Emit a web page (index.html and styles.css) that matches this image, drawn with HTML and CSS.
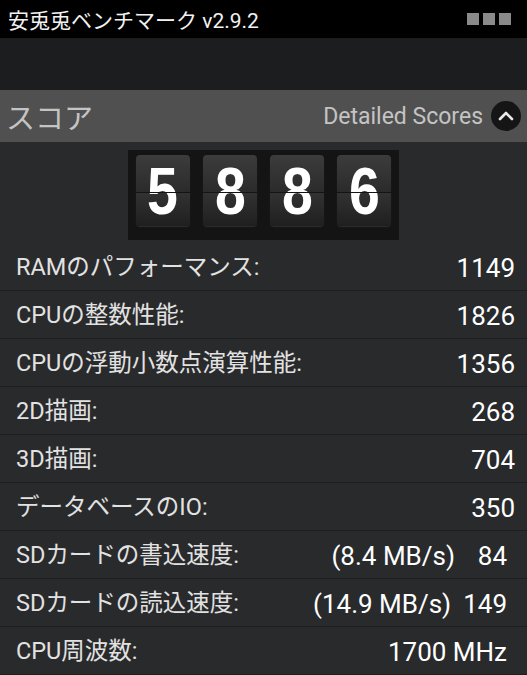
FILE: index.html
```html
<!DOCTYPE html>
<html lang="ja">
<head>
    <meta charset="UTF-8">
    <meta name="viewport" content="width=device-width, initial-scale=1.0">
    <title>安兎兎ベンチマーク</title>
    <link rel="stylesheet" href="styles.css">
</head>
<body>
    <div class="titlebar">
        <span class="app-title">安兎兎ベンチマーク v2.9.2</span>
        <div class="menu-dots">
            <span></span><span></span><span></span>
        </div>
    </div>
    <div class="band"></div>
    <div class="section-head">
        <span class="section-title">スコア</span>
        <div class="detail-toggle">
            <span>Detailed Scores</span>
            <span class="toggle-btn">
                <svg width="16" height="10" viewBox="0 0 16 10">
                    <path d="M2 8 L8 2 L14 8" fill="none" stroke="#e8e8e8" stroke-width="2.6" stroke-linecap="round" stroke-linejoin="round"/>
                </svg>
            </span>
        </div>
    </div>
    <div class="counter-wrap">
        <div class="counter">
            <div class="digit"><span>5</span></div>
            <div class="digit"><span>8</span></div>
            <div class="digit"><span>8</span></div>
            <div class="digit"><span>6</span></div>
        </div>
    </div>
    <ul class="scores">
        <li><span>RAMのパフォーマンス:</span><b>1149</b></li>
        <li><span>CPUの整数性能:</span><b>1826</b></li>
        <li><span>CPUの浮動小数点演算性能:</span><b>1356</b></li>
        <li><span>2D描画:</span><b>268</b></li>
        <li><span>3D描画:</span><b>704</b></li>
        <li><span>データベースのIO:</span><b>350</b></li>
        <li class="inset"><span>SDカードの書込速度:</span><b><i>(8.4 MB/s)</i><em>84</em></b></li>
        <li class="inset"><span>SDカードの読込速度:</span><b><i>(14.9 MB/s)</i><em>149</em></b></li>
        <li class="inset"><span>CPU周波数:</span><b>1700 MHz</b></li>
    </ul>
</body>
</html>
```

FILE: styles.css
```css
body {
    margin: 0;
    width: 527px;
    height: 675px;
    overflow: hidden;
    background: #292a2c;
    font-family: Roboto, "Noto Sans CJK JP", sans-serif;
    color: #e8e8e8;
}
.titlebar {
    height: 38px;
    background: #000;
    display: flex;
    align-items: center;
    justify-content: space-between;
    padding: 0 16px 0 8px;
}
.app-title {
    font-size: 21px;
    color: #f2f2f2;
}
.menu-dots {
    display: flex;
    gap: 4px;
}
.menu-dots span {
    width: 12px;
    height: 12px;
    background: #8a8a8a;
}
.band {
    height: 52px;
    background: #1c1d1f;
}
.section-head {
    height: 52px;
    background: #505050;
    display: flex;
    align-items: center;
    justify-content: space-between;
    padding: 0 6px 0 6px;
}
.section-title {
    font-size: 29px;
    color: #c4c4c4;
}
.detail-toggle {
    display: flex;
    align-items: center;
    gap: 8px;
    font-size: 23px;
    color: #c4c4c4;
}
.toggle-btn {
    width: 30px;
    height: 30px;
    border-radius: 50%;
    background: #151515;
    display: flex;
    align-items: center;
    justify-content: center;
}
.counter-wrap {
    height: 101px;
    display: flex;
    justify-content: center;
    padding-top: 8px;
    box-sizing: border-box;
}
.counter {
    width: 271px;
    height: 90px;
    background: #141414;
    display: flex;
    gap: 13.5px;
    padding: 5px 8px 0 8px;
    box-sizing: border-box;
}
.digit {
    position: relative;
    width: 55px;
    height: 71px;
    border-radius: 4px;
    background: linear-gradient(#3c3c3c, #2b2b2b 52%, #333 52%, #1f1f1f);
    box-shadow: 0 1px 1px #2e2e2e;
    color: #fff;
    font-family: "Liberation Sans", sans-serif;
    font-weight: bold;
    font-size: 66px;
    line-height: 73px;
    text-align: center;
}
.digit span {
    display: inline-block;
    transform: scaleX(0.84);
}
.digit::after {
    content: "";
    position: absolute;
    left: 0;
    right: 0;
    top: 37px;
    height: 1px;
    background: #141414;
}
.scores {
    list-style: none;
    margin: 0;
    padding: 0;
}
.scores li {
    height: 47px;
    border-bottom: 1px solid #1d1e20;
    display: flex;
    align-items: center;
    justify-content: space-between;
    padding: 0 12px 0 16px;
}
.scores li.inset {
    padding-right: 20px;
}
.scores span {
    font-size: 23.5px;
    line-height: 49px;
    padding-top: 1px;
    color: #e2e2e2;
}
.scores b {
    font-weight: normal;
    font-size: 26px;
    line-height: 49px;
    padding-top: 4px;
    color: #fff;
    display: flex;
    gap: 12px;
}
.scores i, .scores em {
    font-style: normal;
}
.scores em {
    min-width: 40px;
    text-align: right;
}
```
